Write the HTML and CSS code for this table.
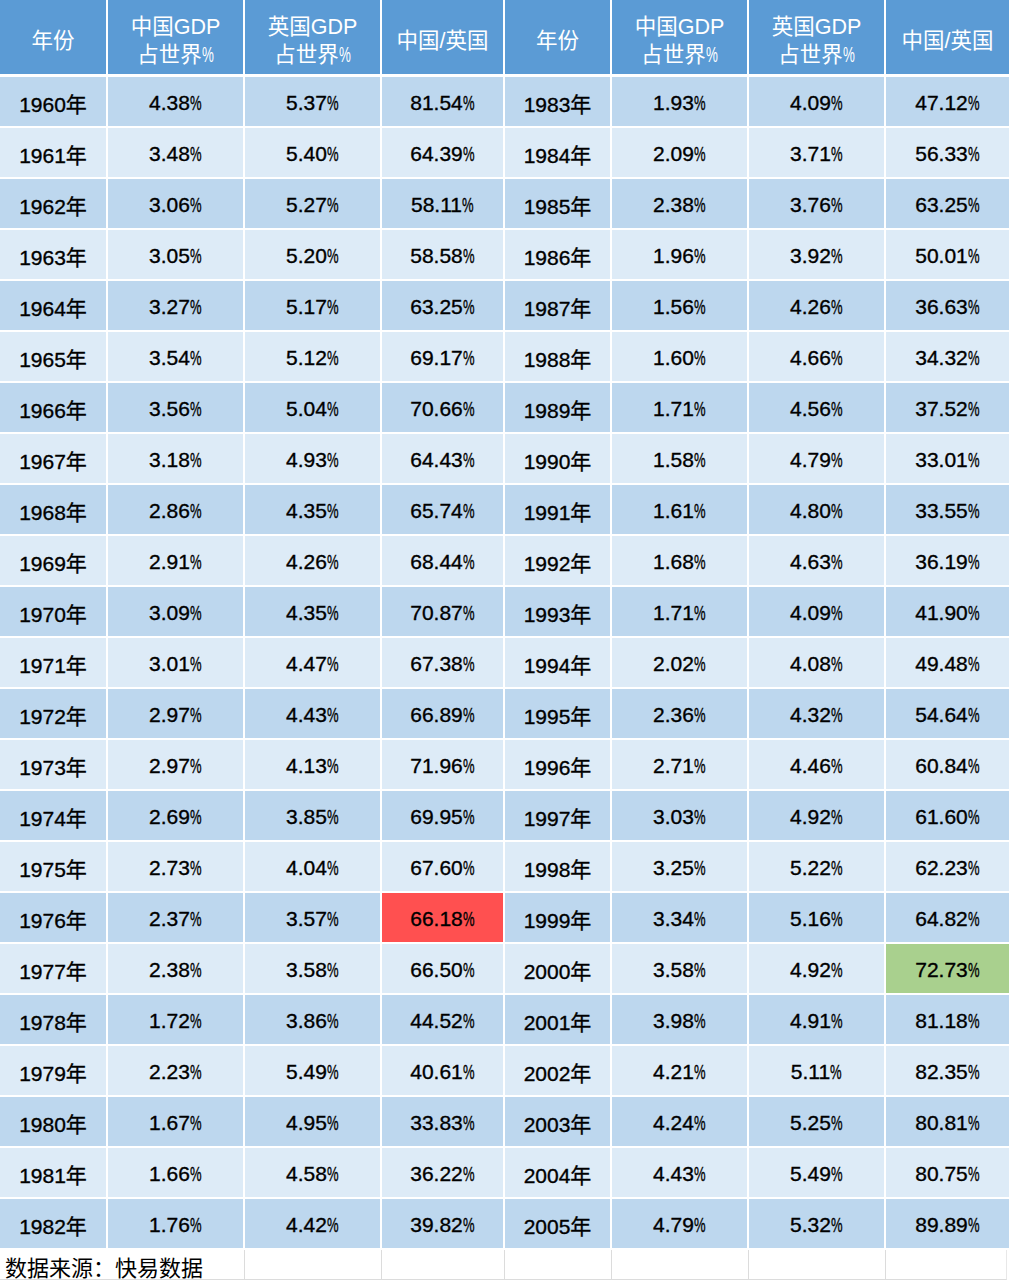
FILE: index.html
```html
<!DOCTYPE html>
<html lang="zh">
<head>
<meta charset="utf-8">
<title>中国与英国GDP占世界比重</title>
<link rel="stylesheet" href="styles.css">
</head>
<body>
<div class="sheet" id="sheet">
  <div class="cell head"><span class="ht">年份</span></div>
  <div class="cell head"><span class="ht">中国GDP<br>占世界<span class="p">%</span></span></div>
  <div class="cell head"><span class="ht">英国GDP<br>占世界<span class="p">%</span></span></div>
  <div class="cell head"><span class="ht">中国/英国</span></div>
  <div class="cell head"><span class="ht">年份</span></div>
  <div class="cell head"><span class="ht">中国GDP<br>占世界<span class="p">%</span></span></div>
  <div class="cell head"><span class="ht">英国GDP<br>占世界<span class="p">%</span></span></div>
  <div class="cell head last"><span class="ht">中国/英国</span></div>
</div>
<script src="script.js"></script>
</body>
</html>
```
FILE: script.js
```js
const rows = [
["1960","4.38","5.37","81.54","1983","1.93","4.09","47.12"],
["1961","3.48","5.40","64.39","1984","2.09","3.71","56.33"],
["1962","3.06","5.27","58.11","1985","2.38","3.76","63.25"],
["1963","3.05","5.20","58.58","1986","1.96","3.92","50.01"],
["1964","3.27","5.17","63.25","1987","1.56","4.26","36.63"],
["1965","3.54","5.12","69.17","1988","1.60","4.66","34.32"],
["1966","3.56","5.04","70.66","1989","1.71","4.56","37.52"],
["1967","3.18","4.93","64.43","1990","1.58","4.79","33.01"],
["1968","2.86","4.35","65.74","1991","1.61","4.80","33.55"],
["1969","2.91","4.26","68.44","1992","1.68","4.63","36.19"],
["1970","3.09","4.35","70.87","1993","1.71","4.09","41.90"],
["1971","3.01","4.47","67.38","1994","2.02","4.08","49.48"],
["1972","2.97","4.43","66.89","1995","2.36","4.32","54.64"],
["1973","2.97","4.13","71.96","1996","2.71","4.46","60.84"],
["1974","2.69","3.85","69.95","1997","3.03","4.92","61.60"],
["1975","2.73","4.04","67.60","1998","3.25","5.22","62.23"],
["1976","2.37","3.57","66.18","1999","3.34","5.16","64.82"],
["1977","2.38","3.58","66.50","2000","3.58","4.92","72.73"],
["1978","1.72","3.86","44.52","2001","3.98","4.91","81.18"],
["1979","2.23","5.49","40.61","2002","4.21","5.11","82.35"],
["1980","1.67","4.95","33.83","2003","4.24","5.25","80.81"],
["1981","1.66","4.58","36.22","2004","4.43","5.49","80.75"],
["1982","1.76","4.42","39.82","2005","4.79","5.32","89.89"]
];
const sheet = document.getElementById("sheet");
rows.forEach((r, i) => {
  r.forEach((v, j) => {
    const c = document.createElement("div");
    c.className = "cell " + (i % 2 === 0 ? "dark" : "light");
    if (j === 7) c.classList.add("last");
    if (i === 16 && j === 3) c.classList.add("red");
    if (i === 17 && j === 7) c.classList.add("green");
    const t = document.createElement("span");
    t.className = "txt";
    if (j === 0 || j === 4) {
      t.textContent = v + "年";
    } else {
      t.textContent = v;
      const s = document.createElement("span");
      s.className = "p";
      s.textContent = "%";
      t.appendChild(s);
    }
    c.appendChild(t);
    sheet.appendChild(c);
  });
});
const f = document.createElement("div");
f.className = "cell foot source";
f.textContent = "数据来源：快易数据";
sheet.appendChild(f);
for (let k = 0; k < 6; k++) {
  const e = document.createElement("div");
  e.className = "cell foot" + (k === 5 ? " last" : "");
  sheet.appendChild(e);
}
```
FILE: styles.css
```css
html, body {
  margin: 0;
  padding: 0;
  background: #ffffff;
}
.sheet {
  display: grid;
  grid-template-columns: 108px 137px 137px 123px 107px 137px 137px 123px;
  grid-template-rows: 77px repeat(23, 51px) 30px;
  width: 1009px;
  font-family: "Liberation Sans", "Noto Sans CJK SC", sans-serif;
  font-size: 21px;
  color: #000;
}
.cell {
  box-sizing: border-box;
  display: flex;
  align-items: center;
  justify-content: center;
  text-align: center;
  border-right: 2px solid #ffffff;
  border-bottom: 2px solid #ffffff;
  padding-top: 2px;
  white-space: nowrap;
}
.txt {
  -webkit-text-stroke: 0.35px #000;
}
.cell.last {
  border-right: none;
}
.head {
  background: #5b9bd5;
  color: #ffffff;
  border-bottom-width: 3px;
  padding-top: 8px;
  font-size: 21.5px;
}
.ht {
  display: block;
  line-height: 28px;
}
.dark { background: #bdd7ee; }
.light { background: #ddebf7; }
.red { background: #ff5050; }
.green { background: #a9d08e; }
.p {
  display: inline-block;
  width: 12px;
  transform: scaleX(0.62);
  transform-origin: left center;
}
.foot {
  background: #ffffff;
  border-right: 1px solid #dcdcdc;
  border-bottom: 1px solid #dcdcdc;
}
.foot.last {
  border-right: 1px solid #e8e8e8;
  margin-right: 2px;
}
.source {
  grid-column: span 2;
  justify-content: flex-start;
  padding-left: 5px;
  padding-top: 3px;
  font-size: 22px;
}
```
